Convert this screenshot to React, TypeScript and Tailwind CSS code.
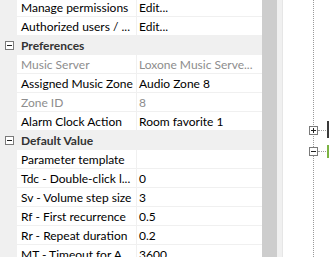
type Row =
  | { kind: 'cat'; label: string }
  | { kind: 'prop'; name: string; value: string; disabled?: boolean };

const rows: Row[] = [
  { kind: 'prop', name: 'Manage permissions', value: 'Edit...' },
  { kind: 'prop', name: 'Authorized users / ...', value: 'Edit...' },
  { kind: 'cat', label: 'Preferences' },
  { kind: 'prop', name: 'Music Server', value: 'Loxone Music Serve...', disabled: true },
  { kind: 'prop', name: 'Assigned Music Zone', value: 'Audio Zone 8' },
  { kind: 'prop', name: 'Zone ID', value: '8', disabled: true },
  { kind: 'prop', name: 'Alarm Clock Action', value: 'Room favorite 1' },
  { kind: 'cat', label: 'Default Value' },
  { kind: 'prop', name: 'Parameter template', value: '' },
  { kind: 'prop', name: 'Tdc - Double-click l...', value: '0' },
  { kind: 'prop', name: 'Sv - Volume step size', value: '3' },
  { kind: 'prop', name: 'Rf - First recurrence', value: '0.5' },
  { kind: 'prop', name: 'Rr - Repeat duration', value: '0.2' },
  { kind: 'prop', name: 'MT - Timeout for A...', value: '3600' },
];

const Expander = ({ plus = false }: { plus?: boolean }) => (
  <svg width="9" height="9" viewBox="0 0 9 9" className="block">
    <rect x="0.5" y="0.5" width="8" height="8" fill="white" stroke="#7a7a7a" />
    <line x1="2" y1="4.5" x2="7" y2="4.5" stroke="#222" />
    {plus && <line x1="4.5" y1="2" x2="4.5" y2="7" stroke="#222" />}
  </svg>
);

export default function App() {
  return (
    <div
      className="flex w-[329px] h-[257px] overflow-hidden bg-white text-[12px] leading-none"
      style={{ fontFamily: 'Lato, "Segoe UI", sans-serif' }}
    >
      {/* property grid */}
      <div className="w-[262px] shrink-0 flex flex-col -mt-[2px]">
        {rows.map((r, i) =>
          r.kind === 'cat' ? (
            <div key={i} className="flex h-[19px] shrink-0 items-center bg-[#f0f0f0]">
              <div className="w-[17px] flex justify-center pl-[1px]">
                <Expander />
              </div>
              <span className="pl-[4px] pt-[1px] font-bold text-[#333]">{r.label}</span>
            </div>
          ) : (
            <div key={i} className="flex h-[19px] shrink-0">
              <div className="w-[17px] bg-[#f0f0f0]" />
              <div
                className={`w-[120px] flex items-center pl-[4px] pt-[1px] border-b border-r border-[#f0f0f0] whitespace-nowrap overflow-hidden ${
                  r.disabled ? 'text-[#8d8d8d]' : 'text-black'
                }`}
              >
                {r.name}
              </div>
              <div
                className={`flex-1 flex items-center pl-[2px] pt-[1px] border-b border-[#f0f0f0] whitespace-nowrap overflow-hidden ${
                  r.disabled ? 'text-[#8d8d8d]' : 'text-black'
                }`}
              >
                {r.value}
              </div>
            </div>
          )
        )}
      </div>

      {/* scrollbar track */}
      <div className="w-[15px] shrink-0 bg-[#cdcdcd]" />
      <div className="w-[6px] shrink-0 bg-[#f0f0f0] border-r border-[#e6e6e6]" />

      {/* tree panel */}
      <div className="relative flex-1 bg-white">
        <div className="absolute left-[30px] top-0 h-full border-l border-dotted border-[#9a9a9a]" />
        <div className="absolute left-[26px] top-[123px] flex items-center">
          <Expander plus />
          <div className="w-[8px] border-t border-dotted border-[#9a9a9a]" />
          <div className="ml-[1px] w-[3px] h-[17px] -mt-[2px] bg-[#3a3a3a]" />
        </div>
        <div className="absolute left-[26px] top-[145px] flex items-center">
          <Expander />
          <div className="w-[8px] border-t border-dotted border-[#9a9a9a]" />
          <div className="ml-[1px] w-[3px] h-[13px] bg-[#7cb342]" />
        </div>
      </div>
    </div>
  );
}
